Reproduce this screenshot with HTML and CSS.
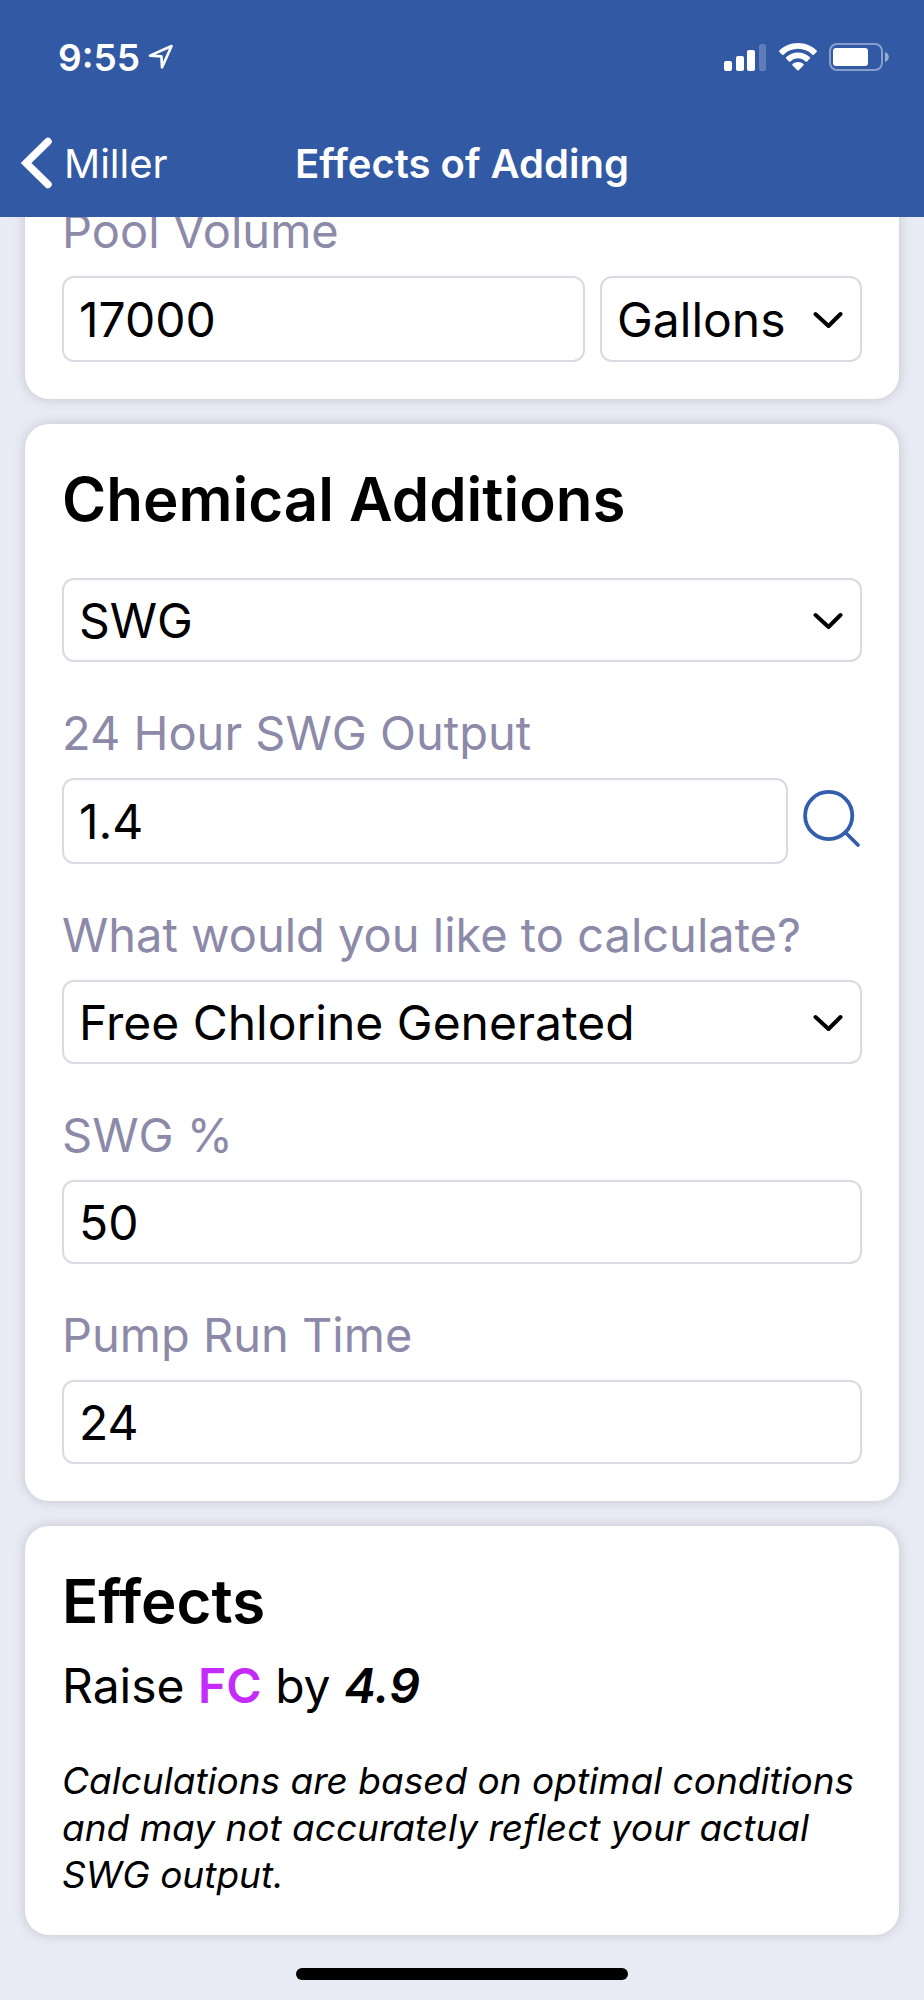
FILE: index.html
```
<!DOCTYPE html>
<html lang="en">
<head>
  <meta charset="UTF-8">
  <meta name="viewport" content="width=device-width, initial-scale=1">
  <title>Effects of Adding</title>
  <link rel="stylesheet" href="styles.css">
</head>
<body>

  <header class="header">
    <div class="status-bar">
      <div class="status-left">
        <span class="time">9:55</span>
        <svg width="26" height="26" viewBox="0 0 26 26" fill="none" stroke="#fff" stroke-width="2.6" stroke-linejoin="round"><path d="M2 11.6 23.6 2 14 23.4 13.4 12.4Z"/></svg>
      </div>
      <div class="status-right">
        <!-- signal -->
        <svg width="43" height="28" viewBox="0 0 43 28" fill="#fff">
          <rect x="0" y="18" width="8" height="10" rx="2"/>
          <rect x="12" y="13" width="8" height="15" rx="2"/>
          <rect x="23" y="7" width="8" height="21" rx="2"/>
          <rect x="35" y="1" width="7" height="27" rx="2" opacity=".22"/>
        </svg>
        <!-- wifi -->
        <svg width="38" height="28" viewBox="0 0 38 28" fill="#fff">
          <path d="M19 0C12 0 5.300 2.700.4 7.500a1 1 0 0 0 0 1.400l2.800 2.800a1 1 0 0 0 1.400 0A20.500 20.500 0 0 1 33.400 11.700a1 1 0 0 0 1.400 0l2.800-2.800a1 1 0 0 0 0-1.400C32.700 2.700 26 0 19 0Z"/>
          <path d="M19 9.500c-4.500 0-8.700 1.700-11.900 4.700a1 1 0 0 0 0 1.400l2.800 2.800a1 1 0 0 0 1.400 0 11.300 11.300 0 0 1 15.400 0 1 1 0 0 0 1.400 0l2.800-2.800a1 1 0 0 0 0-1.400C27.700 11.200 23.500 9.500 19 9.500Z"/>
          <path d="M19 19c-2 0-3.900.700-5.400 1.900a1 1 0 0 0 0 1.500l4.700 4.800a1 1 0 0 0 1.400 0l4.700-4.800a1 1 0 0 0 0-1.500C22.900 19.700 21 19 19 19Z"/>
        </svg>
        <!-- battery -->
        <svg width="60" height="28" viewBox="0 0 60 28">
          <rect x="1" y="1" width="52" height="26" rx="7" fill="none" stroke="#fff" stroke-width="2" opacity=".42"/>
          <rect x="4" y="5" width="35" height="18" rx="3" fill="#fff"/>
          <path d="M56 9c2.400.8 3.800 2.700 3.800 5s-1.400 4.200-3.800 5Z" fill="#fff" opacity=".5"/>
        </svg>
      </div>
    </div>
    <nav class="nav">
      <a class="back" href="#">
        <svg width="32" height="52" viewBox="0 0 32 52" fill="none" stroke="#fff" stroke-width="7.500" stroke-linecap="round"><path d="M27 4.500 5 26 27 47.500" stroke-linejoin="miter"/></svg>
        Miller
      </a>
      <h1>Effects of Adding</h1>
    </nav>
  </header>

  <main class="content">

    <section class="card card-volume">
      <div class="field">
        <label for="volume">Pool Volume</label>
        <div class="row">
          <input type="text" id="volume" value="17000">
          <div class="select unit">
            <select aria-label="Unit"><option>Gallons</option><option>Liters</option></select>
            <svg class="chevron" width="30" height="18" viewBox="0 0 30 18"><path d="M2.500 3 15.500 15 27.500 3"/></svg>
          </div>
        </div>
      </div>
    </section>

    <section class="card">
      <h2>Chemical Additions</h2>
      <div class="select chemical">
        <select aria-label="Chemical"><option>SWG</option></select>
        <svg class="chevron" width="30" height="18" viewBox="0 0 30 18"><path d="M2.500 3 15.500 15 27.500 3"/></svg>
      </div>
      <div class="field">
        <label for="output">24 Hour SWG Output</label>
        <div class="row">
          <input type="text" id="output" value="1.4">
          <button class="search" type="button" aria-label="Search">
            <svg width="59" height="64" viewBox="0 0 59 64" fill="none" stroke="#345dab" stroke-width="3.800" stroke-linecap="round"><circle cx="25.700" cy="26.500" r="23.600"/><path d="M42.500 43.500 55 56"/></svg>
          </button>
        </div>
      </div>
      <div class="field">
        <label for="calculate">What would you like to calculate?</label>
        <div class="select">
          <select id="calculate"><option>Free Chlorine Generated</option></select>
          <svg class="chevron" width="30" height="18" viewBox="0 0 30 18"><path d="M2.500 3 15.500 15 27.500 3"/></svg>
        </div>
      </div>
      <div class="field">
        <label for="percent">SWG %</label>
        <input type="text" id="percent" value="50">
      </div>
      <div class="field">
        <label for="runtime">Pump Run Time</label>
        <input type="text" id="runtime" value="24">
      </div>
    </section>

    <section class="card">
      <h2>Effects</h2>
      <p class="result">Raise <b class="fc">FC</b> by <b><i>4.9</i></b></p>
      <p class="note">Calculations are based on optimal conditions and may not accurately reflect your actual SWG output.</p>
    </section>

  </main>

  <div class="home-bar"></div>

</body>
</html>
```

FILE: styles.css
```
* { box-sizing: border-box; }
body { margin: 0; background: #e9ebf4; color: #000; font-family: Inter, "Liberation Sans", sans-serif; font-size: 48px; }
svg { display: block; flex: none; }
h1, h2, p { margin: 0; }

/* header */
.header { position: sticky; top: 0; z-index: 1; padding-bottom: 5px; background: #3259a4; color: #fff; }
.status-bar { display: flex; justify-content: space-between; align-items: center; height: 114px; padding: 0 35px 0 58px; }
.status-left { display: flex; align-items: center; gap: 8px; }
.status-right { display: flex; gap: 12px; }
.time { font-size: 37px; font-weight: 600; }
.nav { display: grid; grid-template-columns: 1fr auto 1fr; align-items: center; height: 98px; padding: 0 21px; }
.back { display: flex; align-items: center; gap: 11px; color: #fff; font-size: 40px; text-decoration: none; }
h1 { font-size: 40px; font-weight: 600; }

/* cards */
.content { display: flex; flex-direction: column; gap: 25px; padding: 0 25px; }
.card { padding: 37px; background: #fff; border-radius: 24px; box-shadow: 0 0 12px rgba(60, 50, 80, 0.22); }
.card-volume { margin-top: -94px; }
h2 { font-size: 60px; font-weight: 600; line-height: 76px; }

/* form */
.field { margin-top: 41px; }
label { display: block; margin-bottom: 15px; color: #8c8aa8; font-size: 47px; line-height: 60px; }
.row { display: flex; align-items: center; gap: 15px; }
input, select { display: block; width: 100%; height: 84px; margin: 0; padding: 0 15px; background: #fff; border: 2px solid #dbdae4; border-radius: 12px; color: #000; font: inherit; appearance: none; }
.row input, .row select { height: 86px; }
.row input { flex: 1; min-width: 0; }
.select { position: relative; }
.chemical { margin-top: 41px; }
.unit { flex: 0 0 262px; }
.chevron { position: absolute; right: 19px; top: 50%; margin-top: -8px; fill: none; stroke: #000; stroke-width: 4; stroke-linecap: round; stroke-linejoin: round; pointer-events: none; }
.search { padding: 0; background: none; border: 0; cursor: pointer; }

/* effects */
.result { margin-top: 17px; line-height: 60px; }
.result b { font-weight: 600; }
.fc { color: #c42bfb; }
.note { margin-top: 41px; font-size: 37px; font-style: italic; line-height: 47px; }

.home-bar { width: 36%; height: 12px; margin: 33px auto 19px; background: #000; border-radius: 6px; }
```
